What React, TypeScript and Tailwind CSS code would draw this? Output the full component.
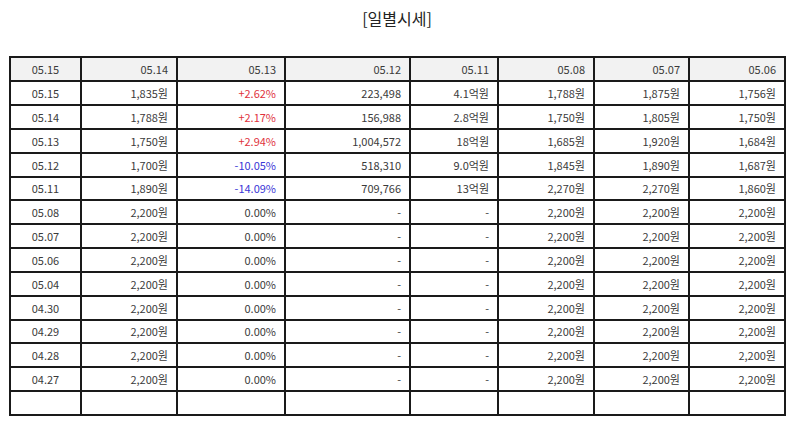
const cols = [71, 96, 108, 125, 88, 96, 95, 96];

const header = ['05.15', '05.14', '05.13', '05.12', '05.11', '05.08', '05.07', '05.06'];

type Row = string[];

const rows: Row[] = [
  ['05.15', '1,835원', '+2.62%', '223,498', '4.1억원', '1,788원', '1,875원', '1,756원'],
  ['05.14', '1,788원', '+2.17%', '156,988', '2.8억원', '1,750원', '1,805원', '1,750원'],
  ['05.13', '1,750원', '+2.94%', '1,004,572', '18억원', '1,685원', '1,920원', '1,684원'],
  ['05.12', '1,700원', '-10.05%', '518,310', '9.0억원', '1,845원', '1,890원', '1,687원'],
  ['05.11', '1,890원', '-14.09%', '709,766', '13억원', '2,270원', '2,270원', '1,860원'],
  ['05.08', '2,200원', '0.00%', '-', '-', '2,200원', '2,200원', '2,200원'],
  ['05.07', '2,200원', '0.00%', '-', '-', '2,200원', '2,200원', '2,200원'],
  ['05.06', '2,200원', '0.00%', '-', '-', '2,200원', '2,200원', '2,200원'],
  ['05.04', '2,200원', '0.00%', '-', '-', '2,200원', '2,200원', '2,200원'],
  ['04.30', '2,200원', '0.00%', '-', '-', '2,200원', '2,200원', '2,200원'],
  ['04.29', '2,200원', '0.00%', '-', '-', '2,200원', '2,200원', '2,200원'],
  ['04.28', '2,200원', '0.00%', '-', '-', '2,200원', '2,200원', '2,200원'],
  ['04.27', '2,200원', '0.00%', '-', '-', '2,200원', '2,200원', '2,200원'],
  ['', '', '', '', '', '', '', ''],
];

function rateColor(v: string) {
  if (v.startsWith('+')) return 'text-[#e0323c]';
  if (v.startsWith('-')) return 'text-[#3a36d6]';
  return 'text-[#3a3a3a]';
}

// rows 5 and 11 of the body are one pixel shorter in the original
const rowHeight = (i: number) => (i === 4 || i === 10 ? 'h-[23px]' : 'h-[24px]');

const cell = 'border-r-2 border-b-2 border-[#1a1a1a] px-[8px] py-0 leading-none';

export default function App() {
  return (
    <div
      className="w-[794px] h-[425px] bg-white overflow-hidden"
      style={{ fontFamily: '"Noto Sans CJK KR", "Noto Sans", sans-serif' }}
    >
      <h2 className="pt-[5px] h-[56px] text-center text-[16px] text-[#222] leading-[26px]">[일별시세]</h2>

      <table className="ml-[9px] w-[777px] table-fixed border-separate border-spacing-0 border-l-2 border-t-2 border-[#1a1a1a] text-[11px] text-[#3a3a3a]">
        <colgroup>
          {cols.map((w, i) => (
            <col key={i} style={{ width: w }} />
          ))}
        </colgroup>
        <thead>
          <tr className="h-[24px] bg-[#f2f2f2]">
            {header.map((h, i) => (
              <th key={i} className={`${cell} font-normal ${i === 0 ? 'text-center' : 'text-right'}`}>
                {h}
              </th>
            ))}
          </tr>
        </thead>
        <tbody>
          {rows.map((r, ri) => (
            <tr key={ri} className={rowHeight(ri)}>
              {r.map((c, ci) => (
                <td
                  key={ci}
                  className={`${cell} ${ci === 0 ? 'text-center' : 'text-right'} ${ci === 2 ? rateColor(c) : ''}`}
                >
                  {c}
                </td>
              ))}
            </tr>
          ))}
        </tbody>
      </table>
    </div>
  );
}
